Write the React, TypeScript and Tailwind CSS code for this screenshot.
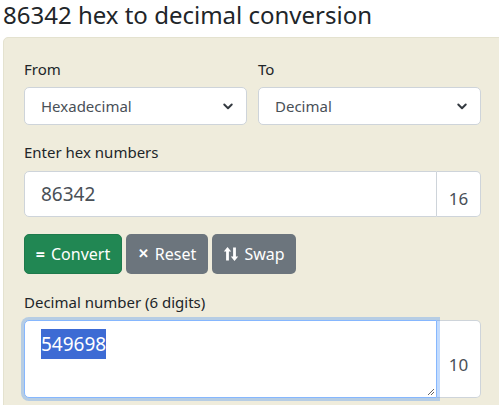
import React from 'react';

function Chevron() {
  return (
    <svg width="12" height="12" viewBox="0 0 16 16" className="text-[#343a40]">
      <path d="M3 6l5 5 5-5" fill="none" stroke="currentColor" strokeWidth="2.6" strokeLinecap="round" strokeLinejoin="round" />
    </svg>
  );
}

function Select({ value }: { value: string }) {
  return (
    <div className="flex h-[38px] items-center justify-between rounded-[5px] border border-[#ced4da] bg-white pl-[16px] pr-[12px] text-[15px] text-[#495057]">
      <span>{value}</span>
      <Chevron />
    </div>
  );
}

function SwapIcon() {
  return (
    <svg width="16" height="16" viewBox="0 0 16 16" fill="currentColor">
      <path d="M4.5 1 L8.2 5.6 H5.9 V14.5 H3.1 V5.6 H0.8 Z" />
      <path d="M11.5 15 L15.2 10.4 H12.9 V1.5 H10.1 V10.4 H7.8 Z" />
    </svg>
  );
}

export default function App() {
  return (
    <div className="h-[405px] w-[499px] overflow-hidden bg-white font-['Noto_Sans',sans-serif] text-[#212529]">
      <h1 className="pl-[3px] text-[24px] leading-[30px]">86342 hex to decimal conversion</h1>

      <div className="ml-[3px] mt-[7px] w-[520px] rounded-tl-[5px] border border-[#e4e2cf] bg-[#efecdc] pl-[20px] pr-[38px] pt-[19px] pb-6">
        <div className="grid w-[457px] grid-cols-2 gap-[11px]">
          <div>
            <label className="mb-[6px] block text-[15px] leading-[24px]">From</label>
            <Select value="Hexadecimal" />
          </div>
          <div>
            <label className="mb-[6px] block text-[15px] leading-[24px]">To</label>
            <Select value="Decimal" />
          </div>
        </div>

        <label className="mt-[15px] block text-[15px] leading-[24px]">Enter hex numbers</label>
        <div className="mt-[7px] flex h-[46px] w-[457px]">
          <div className="flex flex-1 items-center rounded-l-[5px] border border-[#ced4da] bg-white pl-[16px] text-[19px] text-[#495057]">
            86342
          </div>
          <div className="flex w-[44px] items-end justify-center rounded-r-[5px] border border-l-0 border-[#ced4da] bg-white pb-[5px] text-[17px] text-[#495057]">
            16
          </div>
        </div>

        <div className="mt-[17px] flex gap-[4px] text-[16px] text-white">
          <button className="flex h-[40px] w-[98px] items-center justify-center gap-[6px] rounded-[5px] border border-[#1e7a4c] bg-[#218753]">
            <span className="font-bold">=</span>Convert
          </button>
          <button className="flex h-[40px] w-[82px] items-center justify-center gap-[6px] rounded-[5px] bg-[#6c757d]">
            <span className="text-[13px] font-bold">✕</span>Reset
          </button>
          <button className="flex h-[40px] w-[84px] items-center justify-center gap-[5px] rounded-[5px] bg-[#6c757d]">
            <SwapIcon />Swap
          </button>
        </div>

        <label className="mt-[16px] block text-[15px] leading-[24px]">Decimal number (6 digits)</label>
        <div className="mt-[6px] flex h-[78px] w-[457px]">
          <div className="relative flex-1 rounded-l-[5px] border border-[#86b7fe] bg-white pl-[16px] pt-[8px] text-[19px] text-[#495057] shadow-[0_0_0_3px_rgba(13,110,253,0.25)]">
            <span className="inline-block bg-[#3d6bd4] leading-[30px] text-white">549698</span>
            <svg className="absolute bottom-[1px] right-[1px]" width="10" height="10" viewBox="0 0 10 10">
              <path d="M9 3L3 9M9 6L6 9" stroke="#666" strokeWidth="1" />
            </svg>
          </div>
          <div className="flex w-[44px] items-center justify-center rounded-r-[5px] border border-l-0 border-[#ced4da] bg-white pt-[12px] text-[17px] text-[#495057]">
            10
          </div>
        </div>
      </div>
    </div>
  );
}
